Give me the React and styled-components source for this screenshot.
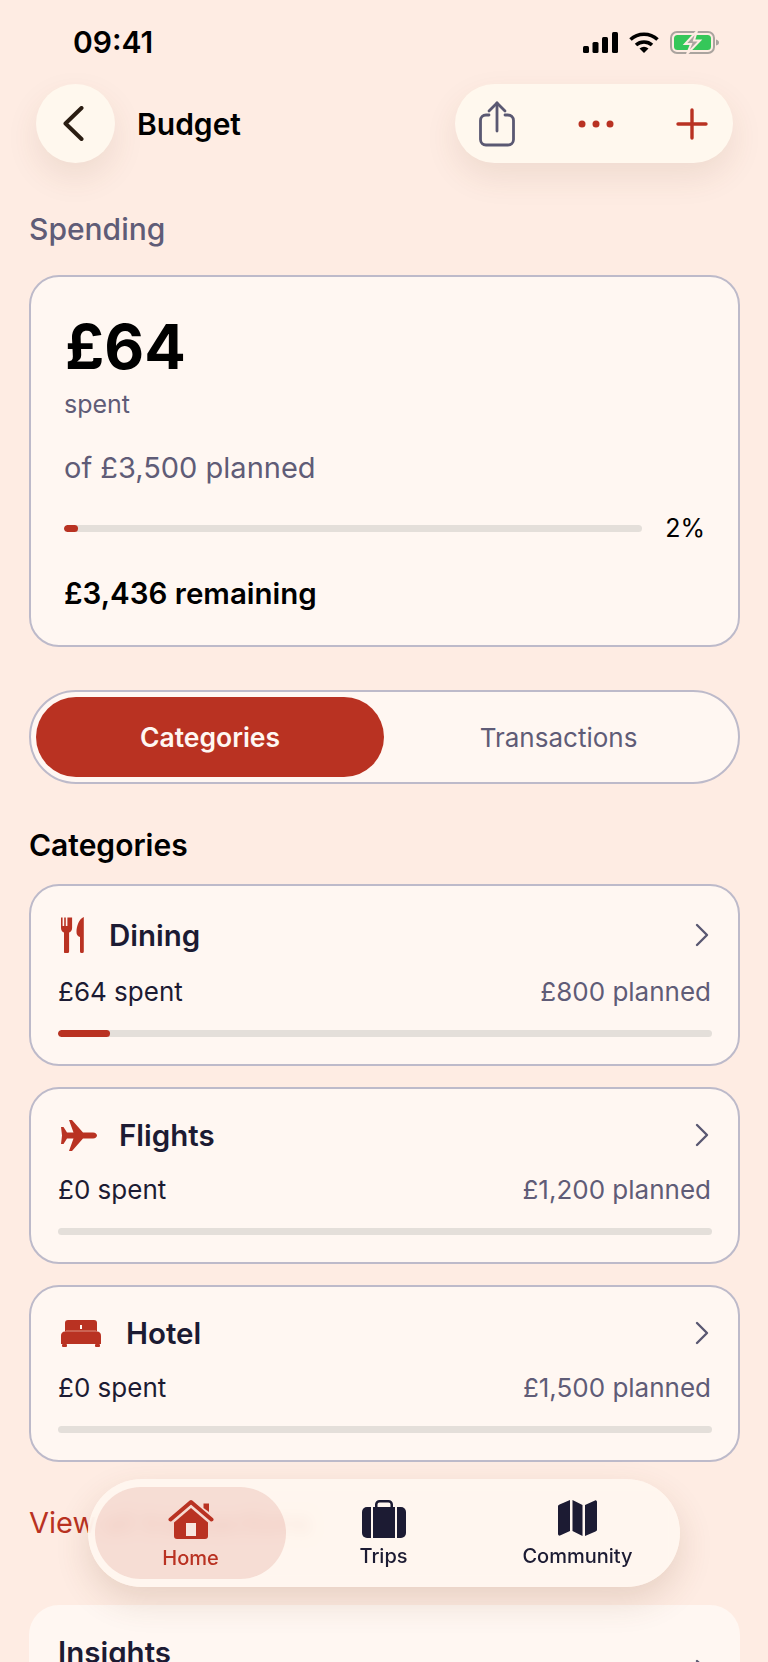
import React from "react";
import styled, { createGlobalStyle } from "styled-components";

const GlobalStyle = createGlobalStyle`
  html, body {
    margin: 0;
    padding: 0;
    background: #feece3;
  }
  * {
    box-sizing: border-box;
  }
`;

// Layout
const Page = styled.div`
  position: relative;
  width: 768px;
  height: 1662px;
  overflow: hidden;
  background: #feece3;
  font-family: Inter, "Liberation Sans", sans-serif;
  color: #000;
`;

const Content = styled.div`
  display: flex;
  flex-direction: column;
  padding: 0 28px 0 29px;
`;

// Status bar
const StatusBar = styled.div`
  display: flex;
  align-items: center;
  justify-content: space-between;
  height: 84px;
  padding: 0 49px 0 73px;
  margin: 0 -28px 0 -29px;
`;

const Clock = styled.div`
  font-size: 30px;
  font-weight: 600;
`;

const StatusIcons = styled.div`
  display: flex;
  align-items: center;
  gap: 11px;
`;

// Header
const Header = styled.div`
  display: flex;
  align-items: center;
  height: 79px;
  padding: 0 7px;
`;

const BackButton = styled.div`
  display: flex;
  align-items: center;
  justify-content: center;
  width: 79px;
  height: 79px;
  padding-right: 4px;
  border-radius: 50%;
  background: #fff8ee;
  box-shadow: 0 14px 32px rgba(110, 70, 40, 0.1);
`;

const PageTitle = styled.div`
  margin-left: 22px;
  font-size: 30px;
  font-weight: 600;
  flex: 1;
`;

const ActionPill = styled.div`
  display: flex;
  align-items: center;
  gap: 62px;
  width: 278px;
  height: 79px;
  padding-left: 23px;
  border-radius: 40px;
  background: #fff8ee;
  box-shadow: 0 14px 32px rgba(110, 70, 40, 0.1);
`;

const SectionLabel = styled.div`
  margin-top: ${(p) => p.$top}px;
  font-size: 30px;
  line-height: 36px;
  font-weight: ${(p) => p.$weight || 600};
  color: ${(p) => p.$color || "#000"};
`;

// Summary card
const Card = styled.div`
  border: 2px solid ${(p) => (p.$flat ? "transparent" : "#bdbaca")};
  border-radius: 30px;
  background: #fff7f2;
`;

const SummaryCard = styled(Card)`
  height: 372px;
  margin-top: 28px;
  padding: 39px 33px 0 33px;
`;

const Amount = styled.div`
  margin-left: 1px;
  font-size: 61.500px;
  line-height: 62px;
  font-weight: 700;
`;

const SpentLabel = styled.div`
  margin-top: 11px;
  font-size: 25px;
  line-height: 30px;
  color: #5f5c77;
`;

const PlannedLabel = styled.div`
  margin-top: 31px;
  font-size: 29px;
  line-height: 36px;
  color: #5f5c77;
`;

const ProgressRow = styled.div`
  display: flex;
  align-items: center;
  justify-content: space-between;
  margin-top: 26px;
  height: 32px;
`;

const Track = styled.div`
  height: 7px;
  border-radius: 4px;
  background: #e4dfda;
  overflow: hidden;
  width: ${(p) => (p.$width ? `${p.$width}px` : "auto")};
`;

const Fill = styled.div`
  height: 100%;
  border-radius: 4px;
  background: #b93222;
`;

const Percent = styled.div`
  font-size: 25px;
`;

const Remaining = styled.div`
  margin-top: 31px;
  font-size: 29.500px;
  line-height: 36px;
  font-weight: 600;
`;

// Segmented control
const Segments = styled.div`
  display: grid;
  grid-template-columns: 348px 1fr;
  height: 94px;
  margin-top: 43px;
  padding: 5px;
  border: 2px solid #bdbaca;
  border-radius: 47px;
  background: #fff7f2;
`;

const Segment = styled.div`
  display: flex;
  align-items: center;
  justify-content: center;
  border-radius: 40px;
  font-size: ${(p) => (p.$active ? 26.5 : 26)}px;
  font-weight: ${(p) => (p.$active ? 600 : 400)};
  color: ${(p) => (p.$active ? "#fff7f2" : "#5f5c77")};
  background: ${(p) => (p.$active ? "#b93222" : "transparent")};
`;

// Category cards
const CategoryList = styled.div`
  display: flex;
  flex-direction: column;
  gap: 21px;
  margin-top: 21px;
`;

const CategoryCard = styled(Card)`
  padding: 28px 27px 27px 27px;
`;

const CategoryHead = styled.div`
  display: flex;
  align-items: center;
  min-height: ${(p) => p.$height}px;
  gap: ${(p) => p.$gap}px;
`;

const IconSlot = styled.div`
  display: flex;
  padding-left: 3px;
`;

const CategoryName = styled.div`
  flex: 1;
  font-size: 29.500px;
  font-weight: 600;
  color: #1c1b33;
`;

const ChevronSlot = styled.div`
  display: flex;
  margin-right: 2px;
  margin-top: ${(p) => p.$top || 0}px;
`;

const CategoryFigures = styled.div`
  display: flex;
  justify-content: space-between;
  margin-top: 21px;
  font-size: 26px;
  line-height: 32px;
  color: #1c1b33;
`;

const Planned = styled.span`
  color: #5f5c77;
`;

const CategoryTrack = styled(Track)`
  margin-top: 22px;
  margin-right: -1px;
`;

const ViewAll = styled.div`
  margin-top: 43px;
  font-size: 29px;
  line-height: 36px;
  color: #b93222;
`;

const InsightsCard = styled(Card)`
  display: flex;
  align-items: flex-start;
  justify-content: space-between;
  height: 120px;
  margin-top: 64px;
  padding: 27px 27px 0 27px;
`;

// Floating tab bar
const TabBar = styled.div`
  position: absolute;
  left: 88px;
  bottom: 75px;
  display: grid;
  grid-template-columns: 191px 195px 193px;
  width: 592px;
  height: 108px;
  padding: 8px 7px;
  border-radius: 54px;
  background: rgba(255, 247, 240, 0.9);
  backdrop-filter: blur(7px);
  box-shadow: 0 14px 34px rgba(110, 70, 40, 0.16);
`;

const Tab = styled.div`
  display: flex;
  flex-direction: column;
  align-items: center;
  padding-top: ${(p) => (p.$active ? 12 : 13)}px;
  border-radius: 46px;
  background: ${(p) => (p.$active ? "rgba(185, 50, 34, 0.13)" : "transparent")};
  color: ${(p) => (p.$active ? "#b93222" : "#1c1b33")};
`;

const TabLabel = styled.div`
  margin-top: ${(p) => p.$top}px;
  font-size: 20px;
  line-height: 24px;
  font-weight: 500;
`;

// Icons
const Signal = () => (
  <svg width="35" height="21" viewBox="0 0 35 21" fill="#000">
    <rect x="0" y="14" width="6" height="7" rx="1.5" />
    <rect x="9.5" y="10" width="6" height="11" rx="1.5" />
    <rect x="19" y="5" width="6" height="16" rx="1.5" />
    <rect x="29" y="0" width="6" height="21" rx="1.5" />
  </svg>
);

const Wifi = () => (
  <svg width="30" height="21" viewBox="0 0 30 21">
    <path d="M1.5 7.5C9 .5 21 .5 28.5 7.5" fill="none" stroke="#000" strokeWidth="3.6" />
    <path d="M7 13C11.5 9 18.5 9 23 13" fill="none" stroke="#000" strokeWidth="3.6" />
    <path d="M10.5 16.5Q15 13 19.5 16.5L15 21Z" fill="#000" />
  </svg>
);

const Battery = () => (
  <svg width="49" height="23" viewBox="0 0 49 23">
    <rect x="1" y="1" width="43" height="21" rx="6" fill="none" stroke="#aaa49f" strokeWidth="2" />
    <rect x="4" y="4" width="37" height="15" rx="3.5" fill="#35c759" />
    <path d="M46 8.5c2 .5 3 1.5 3 3s-1 2.500-3 3z" fill="#aaa49f" />
    <path d="M27 0 L15 13 H21 L17 23 L30 9.500 H24 Z" fill="#aaa49f" stroke="#feece3" strokeWidth="2" />
  </svg>
);

const BackIcon = () => (
  <svg width="21" height="35" viewBox="0 0 21 35" fill="none" stroke="#2a1d12" strokeWidth="4" strokeLinecap="round" strokeLinejoin="round">
    <path d="M18.500 2 L2.500 17.500 L18.500 33" />
  </svg>
);

const ShareIcon = () => (
  <svg width="38" height="46" viewBox="0 0 38 46" fill="none" stroke="#5a5872" strokeWidth="2.8" strokeLinecap="round" strokeLinejoin="round">
    <path d="M11 14H8a5.500 5.500 0 0 0-5.500 5.500v19A5.500 5.500 0 0 0 8 44h22a5.500 5.500 0 0 0 5.500-5.500v-19A5.500 5.500 0 0 0 30 14h-3" />
    <path d="M19 30V2" />
    <path d="M11 10 L19 2 L27 10" />
  </svg>
);

const DotsIcon = () => (
  <svg width="36" height="8" viewBox="0 0 36 8" fill="#b93222">
    <circle cx="4" cy="4" r="3.5" />
    <circle cx="18" cy="4" r="3.5" />
    <circle cx="32" cy="4" r="3.5" />
  </svg>
);

const PlusIcon = () => (
  <svg width="32" height="32" viewBox="0 0 32 32" stroke="#b93222" strokeWidth="3.4" strokeLinecap="round">
    <path d="M16 2V30M2 16H30" />
  </svg>
);

const ChevronRight = () => (
  <svg width="14" height="24" viewBox="0 0 14 24" fill="none" stroke="#5a5872" strokeWidth="2.4" strokeLinecap="round" strokeLinejoin="round">
    <path d="M2 2 L12 12 L2 22" />
  </svg>
);

const ForkIcon = () => (
  <svg width="23" height="36" viewBox="0 0 23 36" fill="#b93222">
    <path d="M0 0.500h1.600V9h1.600V0.500h1.600V9h1.600V0.500H8h3.100V11c0 2.500-1.500 4-3 4.500V34.500a1.500 1.500 0 0 1-1.500 1.500h-1.200A1.500 1.500 0 0 1 3 34.500V15.500C1.500 15 0 13.500 0 11Z" />
    <path d="M22.800 0 C18 2 15.500 9 15.500 15 c0 2.500 .8 4 3.500 5 V34.500 a1.500 1.500 0 0 0 1.500 1.500 h.8 a1.500 1.500 0 0 0 1.500-1.500Z" />
  </svg>
);

const PlaneIcon = () => (
  <svg width="36" height="31" viewBox="0 0 36 31" fill="#b93222">
    <path d="M8 0H11L22 12.500H32C34.500 12.500 36 14 36 15.500S34.500 18.500 32 18.500H22L11 31H8L12.500 18.500H6L2.500 24H0L1 15.500L0 7H2.500L6 12.500H12.500Z" />
  </svg>
);

const BedIcon = () => (
  <svg width="40" height="27" viewBox="0 0 40 27" fill="#b93222">
    <path d="M7 0H33A3 3 0 0 1 36 3V11.500H4V3A3 3 0 0 1 7 0Z" />
    <rect x="19" y="5" width="2" height="4" fill="#fff7f2" />
    <rect x="5" y="10.500" width="30" height="0.800" fill="#e0917f" />
    <path d="M4 11.500H36C38.500 11.500 40 13.500 40 15.500V24H0V15.500C0 13.500 1.500 11.500 4 11.500Z" />
    <rect x="1" y="24" width="5" height="3" rx="1" />
    <rect x="34" y="24" width="5" height="3" rx="1" />
  </svg>
);

const HomeIcon = () => (
  <svg width="46" height="42" viewBox="0 0 46 42">
    <path d="M35.500 4.500H41V13L35.500 9Z" fill="#b93222" />
    <path d="M2.500 20.500L23 3L43.500 20.500" fill="none" stroke="#b93222" strokeWidth="4" strokeLinecap="round" strokeLinejoin="round" />
    <path d="M23 9L40 23.500V37a3 3 0 0 1-3 3H9a3 3 0 0 1-3-3V23.500Z" fill="#b93222" />
    <rect x="18" y="24" width="10" height="13" fill="#f8e6df" />
  </svg>
);

const TripsIcon = () => (
  <svg width="44" height="38" viewBox="0 0 44 38" fill="#1c1b33">
    <path d="M9 7H5A5 5 0 0 0 0 12V33A5 5 0 0 0 5 38H9Z" />
    <path d="M35 7H39A5 5 0 0 1 44 12V33A5 5 0 0 1 39 38H35Z" />
    <path d="M11 7H13V4.500A4.500 4.500 0 0 1 17.500 0H26.500A4.500 4.500 0 0 1 31 4.500V7H33V38H11ZM15.500 7H28.500V4.500A2 2 0 0 0 26.500 2.500H17.500A2 2 0 0 0 15.500 4.500Z" fillRule="evenodd" />
  </svg>
);

const MapIcon = () => (
  <svg width="39" height="36" viewBox="0 0 39 36" fill="#1c1b33">
    <path d="M12 0V31L2 35.500C1 36 0 35 0 34V6.500C0 5.500 .5 5 1.500 4.500Z" />
    <path d="M14.500 0L24.500 5V36L14.500 31Z" />
    <path d="M27 5L37 0.500C38 0 39 1 39 2V29.500C39 30.500 38.500 31 37.500 31.500L27 36Z" />
  </svg>
);

// Data
const categories = [
  { name: "Dining", icon: <ForkIcon />, head: 41, gap: 25, spent: "£64 spent", planned: "£800 planned", percent: 8 },
  { name: "Flights", icon: <PlaneIcon />, head: 34, gap: 22, spent: "£0 spent", planned: "£1,200 planned", percent: 0 },
  { name: "Hotel", icon: <BedIcon />, head: 34, gap: 25, spent: "£0 spent", planned: "£1,500 planned", percent: 0 },
];

function App() {
  return (
    <Page>
      <GlobalStyle />
      <Content>
        <StatusBar>
          <Clock>09:41</Clock>
          <StatusIcons>
            <Signal />
            <Wifi />
            <Battery />
          </StatusIcons>
        </StatusBar>

        <Header>
          <BackButton>
            <BackIcon />
          </BackButton>
          <PageTitle>Budget</PageTitle>
          <ActionPill>
            <ShareIcon />
            <DotsIcon />
            <PlusIcon />
          </ActionPill>
        </Header>

        <SectionLabel $top={48} $weight={500} $color="#5f5c77">
          Spending
        </SectionLabel>

        <SummaryCard>
          <Amount>£64</Amount>
          <SpentLabel>spent</SpentLabel>
          <PlannedLabel>of £3,500 planned</PlannedLabel>
          <ProgressRow>
            <Track $width={578}>
              <Fill style={{ width: "2.400%" }} />
            </Track>
            <Percent>2%</Percent>
          </ProgressRow>
          <Remaining>£3,436 remaining</Remaining>
        </SummaryCard>

        <Segments>
          <Segment $active>Categories</Segment>
          <Segment>Transactions</Segment>
        </Segments>

        <SectionLabel $top={43}>Categories</SectionLabel>

        <CategoryList>
          {categories.map((category) => (
            <CategoryCard key={category.name}>
              <CategoryHead $height={category.head} $gap={category.gap}>
                <IconSlot>{category.icon}</IconSlot>
                <CategoryName>{category.name}</CategoryName>
                <ChevronSlot>
                  <ChevronRight />
                </ChevronSlot>
              </CategoryHead>
              <CategoryFigures>
                <span>{category.spent}</span>
                <Planned>{category.planned}</Planned>
              </CategoryFigures>
              <CategoryTrack>
                <Fill style={{ width: `${category.percent}%` }} />
              </CategoryTrack>
            </CategoryCard>
          ))}
        </CategoryList>

        <ViewAll>View all transactions</ViewAll>

        <InsightsCard $flat>
          <CategoryName>Insights</CategoryName>
          <ChevronSlot $top={25}>
            <ChevronRight />
          </ChevronSlot>
        </InsightsCard>
      </Content>

      <TabBar>
        <Tab $active>
          <HomeIcon />
          <TabLabel $top={5}>Home</TabLabel>
        </Tab>
        <Tab>
          <TripsIcon />
          <TabLabel $top={6}>Trips</TabLabel>
        </Tab>
        <Tab>
          <MapIcon />
          <TabLabel $top={8}>Community</TabLabel>
        </Tab>
      </TabBar>
    </Page>
  );
}

export default App;
